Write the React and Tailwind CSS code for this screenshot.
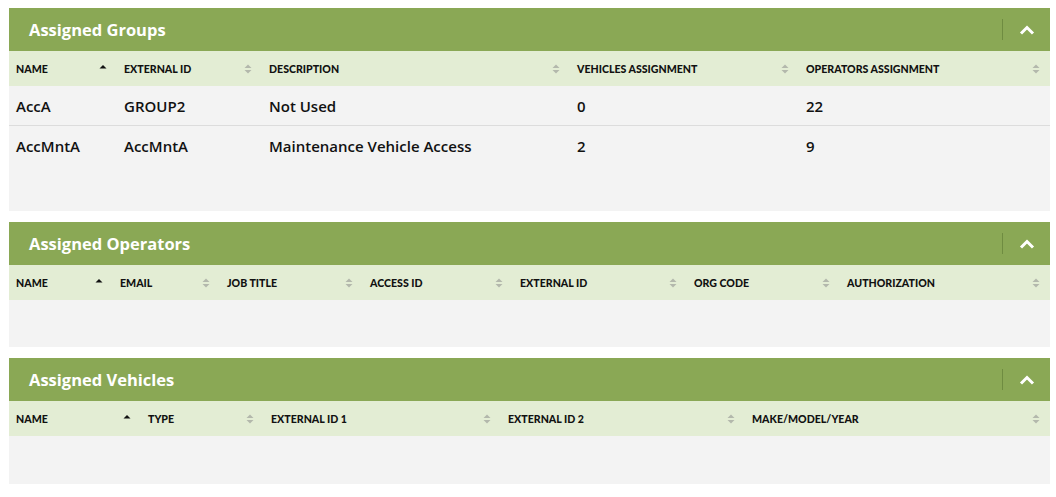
import React from "react";

function SortIcon({ active }) {
  if (active) {
    return (
      <svg width="8" height="10" viewBox="0 0 8 10" className="shrink-0">
        <path d="M4 1 L7.5 4.5 L0.5 4.5 Z" fill="#111" />
      </svg>
    );
  }
  return (
    <svg width="8" height="10" viewBox="0 0 8 10" className="shrink-0">
      <path d="M4 0.5 L7.5 4 L0.5 4 Z" fill="#b3b8ac" />
      <path d="M4 9.5 L7.5 6 L0.5 6 Z" fill="#b3b8ac" />
    </svg>
  );
}

function Chevron() {
  return (
    <svg width="16" height="10" viewBox="0 0 16 10">
      <path d="M2 8.5 L8 2.5 L14 8.5" fill="none" stroke="#fff" strokeWidth="3" />
    </svg>
  );
}

function Panel({ title, columns, rows, bodyHeight }) {
  return (
    <div className="bg-[#f3f3f3]">
      <div className="h-[43px] bg-[#8aa855] flex items-center justify-between">
        <div
          className="pl-[20px] pt-[2px] text-white text-[16.5px] font-bold"
          style={{ fontFamily: "'Open Sans', sans-serif" }}
        >
          {title}
        </div>
        <div className="flex items-center h-full">
          <div className="w-px h-[21px] bg-[#6f8c41]" />
          <div className="w-[47px] flex justify-center items-center pt-[1px]">
            <Chevron />
          </div>
        </div>
      </div>
      <div className="h-[35px] bg-[#e3edd4] flex">
        {columns.map((c, i) => (
          <div
            key={i}
            className="flex items-center justify-between pl-[7px] pr-[10px]"
            style={{ width: c.w }}
          >
            <span className="text-[10.6px] font-black text-[#111] uppercase pt-[2px]">{c.label}</span>
            <SortIcon active={i === 0} />
          </div>
        ))}
      </div>
      <div style={{ minHeight: bodyHeight }}>
        {rows.map((r, ri) => (
          <div
            key={ri}
            className={"flex h-[40px] items-center pt-[1px] " + (ri < rows.length - 1 ? "border-b border-[#dcdcdc]" : "")}
          >
            {r.map((cell, ci) => (
              <div
                key={ci}
                className="pl-[7px] text-[15px] font-semibold text-[#111]"
                style={{ width: columns[ci].w, fontFamily: "'Open Sans', sans-serif" }}
              >
                {cell}
              </div>
            ))}
          </div>
        ))}
      </div>
    </div>
  );
}

export default function App() {
  return (
    <div
      className="w-[1056px] h-[497px] bg-white pt-[8px] pl-[9px] pr-[6px] flex flex-col gap-[11px]"
      style={{ fontFamily: "Lato, 'Open Sans', sans-serif" }}
    >
      <Panel
        title="Assigned Groups"
        columns={[
          { label: "Name", w: 108 },
          { label: "External ID", w: 145 },
          { label: "Description", w: 308 },
          { label: "Vehicles Assignment", w: 229 },
          { label: "Operators Assignment", w: 251 },
        ]}
        rows={[
          ["AccA", "GROUP2", "Not Used", "0", "22"],
          ["AccMntA", "AccMntA", "Maintenance Vehicle Access", "2", "9"],
        ]}
        bodyHeight={125}
      />
      <Panel
        title="Assigned Operators"
        columns={[
          { label: "Name", w: 104 },
          { label: "Email", w: 107 },
          { label: "Job Title", w: 143 },
          { label: "Access ID", w: 150 },
          { label: "External ID", w: 174 },
          { label: "Org Code", w: 153 },
          { label: "Authorization", w: 210 },
        ]}
        rows={[]}
        bodyHeight={47}
      />
      <Panel
        title="Assigned Vehicles"
        columns={[
          { label: "Name", w: 132 },
          { label: "Type", w: 123 },
          { label: "External ID 1", w: 237 },
          { label: "External ID 2", w: 244 },
          { label: "Make/Model/Year", w: 305 },
        ]}
        rows={[]}
        bodyHeight={48}
      />
    </div>
  );
}
